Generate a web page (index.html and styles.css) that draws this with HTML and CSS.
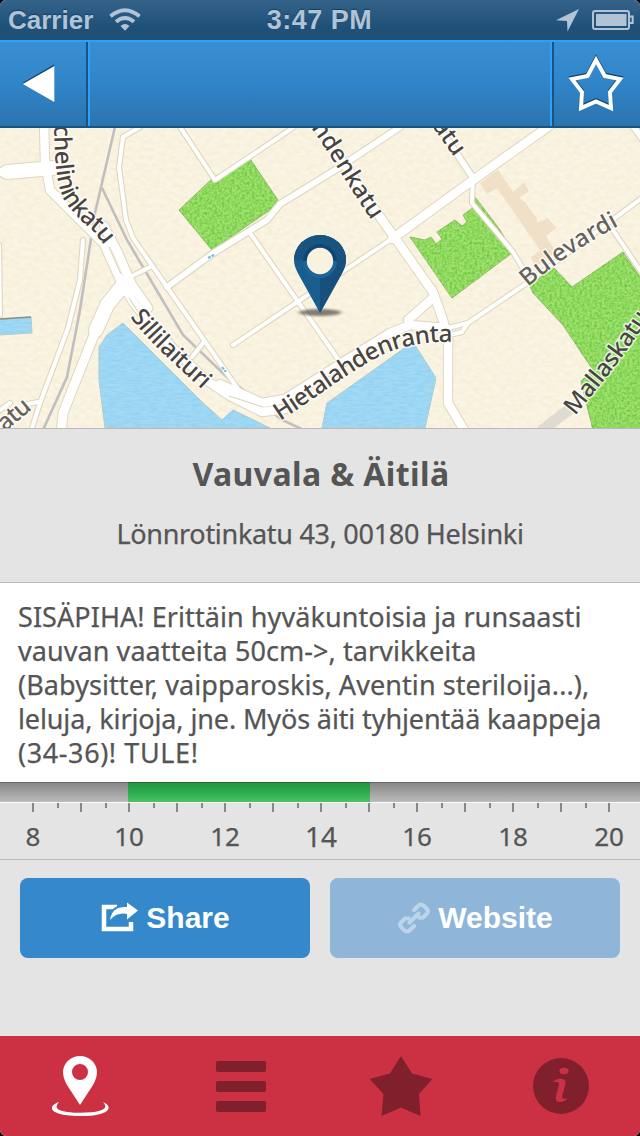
FILE: index.html
```html
<!DOCTYPE html>
<html lang="fi">
<head>
<meta charset="utf-8">
<title>Vauvala &amp; Äitilä</title>
<link rel="stylesheet" href="styles.css">
</head>
<body>
<div class="screen">
  <header class="status">
    <div class="status-left"><span>Carrier</span>
      <svg class="wifi" width="32" height="24" viewBox="0 0 32 24" fill="none" stroke="#b0c4d5" stroke-width="4"><path d="M1.5 8.3Q16 -3.8 30.5 8.3M7 13.8Q16 6.2 25 13.8"/><path d="M11.5 18Q16 14 20.5 18L16 22.8Z" fill="#b0c4d5" stroke="none"/></svg>
    </div>
    <span class="clock">3:47 PM</span>
    <div class="status-right">
      <svg width="24" height="24" viewBox="0 0 24 24"><path d="M23 1L11.5 23.5L11 13L0 12.3Z" fill="#b0c4d5"/></svg>
      <svg width="42" height="20" viewBox="0 0 42 20"><rect x="1" y="1" width="36" height="18" rx="2" fill="none" stroke="#b0c4d5" stroke-width="2"/><path d="M4 4H34.5V16H4Z" fill="#b0c4d5"/><path d="M38 6.5H40.7V13H38" fill="none" stroke="#b0c4d5" stroke-width="2"/></svg>
    </div>
  </header>
  <nav class="navbar">
    <button class="nav-btn back" aria-label="Back"><svg width="34" height="40" viewBox="0 0 34 40"><path d="M.5 19L32 .5V36Z" fill="#123f66"/><path d="M.8 20L32.3 2V38Z" fill="#fff"/></svg></button>
    <div class="nav-title"></div>
    <button class="nav-btn fav" aria-label="Favourite"><svg width="60" height="60" viewBox="0 0 60 60" fill="none" stroke-width="4"><path d="M30 6L38.8 22L54 25L44 38L45 54L30 47.5L15 54L16 38L6 25L21.5 22Z" stroke="#123f66" transform="translate(0 -1.2)"/><path d="M30 6L38.8 22L54 25L44 38L45 54L30 47.5L15 54L16 38L6 25L21.5 22Z" stroke="#fff"/></svg></button>
  </nav>
  <section class="map">
    <svg width="640" height="300" viewBox="0 128 640 300">
      <defs>
        <filter id="grain" x="0" y="0" width="100%" height="100%" color-interpolation-filters="sRGB">
          <feTurbulence type="fractalNoise" baseFrequency=".4" numOctaves="2" seed="4"/>
          <feColorMatrix values="0 0 0 0 .42  0 0 0 0 .76  0 0 0 0 .24  2 0 0 0 -.7"/>
          <feComposite in2="SourceGraphic" operator="in" result="n"/>
          <feMerge><feMergeNode in="SourceGraphic"/><feMergeNode in="n"/></feMerge>
        </filter>
        <filter id="waves" x="0" y="0" width="100%" height="100%" color-interpolation-filters="sRGB">
          <feTurbulence type="fractalNoise" baseFrequency=".12 .45" numOctaves="2" seed="2"/>
          <feColorMatrix values="0 0 0 0 .53  0 0 0 0 .79  0 0 0 0 .94  1.3 0 0 0 -.45"/>
          <feComposite in2="SourceGraphic" operator="in" result="n"/>
          <feMerge><feMergeNode in="SourceGraphic"/><feMergeNode in="n"/></feMerge>
        </filter>
        <filter id="paper" x="0" y="0" width="100%" height="100%" color-interpolation-filters="sRGB">
          <feTurbulence type="fractalNoise" baseFrequency=".15 .25" numOctaves="2" seed="7"/>
          <feColorMatrix values="0 0 0 0 .93  0 0 0 0 .89  0 0 0 0 .78  .8 0 0 0 -.25"/>
          <feComposite in2="SourceGraphic" operator="in" result="n"/>
          <feMerge><feMergeNode in="SourceGraphic"/><feMergeNode in="n"/></feMerge>
        </filter>
        <filter id="soft" x="-30%" y="-100%" width="160%" height="300%"><feGaussianBlur stdDeviation="2.2 1.3"/></filter>
        <g id="thin" class="road">
          <path d="M83 240L80 280L68 328L40 403L32 428M10 403L-4 413M38 402L28 404"/>
          <path d="M140 127L123 137L119 167L126 220L133 238L167 287L220 363L240 392"/>
          <path d="M130 277L150 267M192 357L203 343M250 233L340 362M233 345L390 240"/>
          <path d="M180 127L215 180L294 127M-1 245L0 315M473 177L472 203L513 252L525 272"/>
          <path d="M448 328L468 323L527 283L642 198M450 335L462 332L468 323M613 230L642 273"/>
        </g>
        <g id="medium" class="road"><path d="M167 287L212 254L267 220L280 204L340 167L400 127M437 124L473 178M630 122L645 142"/></g>
        <g id="main" class="road">
          <path d="M44 120L45 162L50 190L104 244L122 284L135 305L172 347L206 380L230 396L262 412L285 409"/>
          <path d="M104 226L118 253L132 285L148 308M220 384L262 403L285 399L340 364L390 333L410 325L446 328"/>
          <path d="M315 124L350 172L380 217L400 245L433 292L443 320L448 340V403L464 430"/>
          <path d="M392 239L473 180L552 124M434 297L408 320M-6 172L10 172"/>
        </g>
        <g id="wide" class="road"><path d="M7 172L53 168M124 284L107 305L96 330"/></g>
      </defs>
      <rect y="128" width="640" height="300" fill="#fbf5e4" filter="url(#paper)"/>
      <g fill="#a2daf5" stroke="#b8ccc4" filter="url(#waves)">
        <path d="M123 323L200 400L222 420L233 410L270 428H105L99 380V347L107 335Z"/><path d="M322 428L327 403L413 342L436 378L425 428Z"/><path d="M-2 320L31 317L32 333L-2 335Z"/>
      </g>
      <path d="M0 319L31 317" stroke="#858b88" stroke-width="1.5"/>
      <g fill="#9fe36e" stroke="#a9b882" filter="url(#grain)">
        <path d="M179 210L213 178L250 159L280 203L212 250Z"/>
        <path d="M410 237L425 240L431 237L436 244L442 239L437 232L455 220L462 226L467 222L463 215L474 207L512 253L452 298Z"/>
        <path d="M475 197L472 203L513 252L500 230Z"/>
        <path d="M553 267L572 287L623 252L642 280V430H593L581 381L593 370L563 325L533 293L527 280Z"/>
      </g>
      <path fill="#f0e0c8" d="M480 183L498 170L513 192L524 182L529 191L519 198L525 202L537 219V223L548 218L556 228L546 236L556 252L535 267L531 257L540 250L497 188L487 194Z"/>
      <path d="M541 431L570 409" stroke="#dedbd0" stroke-width="11"/>
      <path d="M115 127L95 213L80 310L67 377L43 430M102 188L127 240L183 335L228 378L282 420L304 430" fill="none" stroke="#c1bfbd" stroke-width="2.6"/>
      <g stroke="#ddd7be"><use href="#thin" stroke-width="6.2"/><use href="#medium" stroke-width="8"/><use href="#main" stroke-width="10.5"/><use href="#wide" stroke-width="16"/><path class="road" d="M96 330L63 413L61 434" stroke-width="11"/></g>
      <g stroke="#fff"><use href="#thin" stroke-width="4"/><use href="#medium" stroke-width="5.8"/><use href="#main" stroke-width="8.5"/><use href="#wide" stroke-width="14"/><path class="road" d="M96 330L63 413L61 434" stroke-width="9"/></g>
      <path d="M109 247L121 274M129 298L143 319M229 396L263 407" stroke="#ddd7be" stroke-width="1.2"/>
      <path d="M208 258L214 255M222 367L226 372" stroke="#65bdeb" stroke-width="2" stroke-dasharray="3 1"/>
      <g class="streets">
        <path id="p1" d="M54 125C55 168 57 190 67 204Q77 218 93 231L118 262"/><path id="p2" d="M130 317C150 343 168 358 209 396"/>
        <path id="p3" d="M280 421C317 397 347 373 382 355Q415 340 460 342"/><path id="p4" d="M311 128C331 155 350 190 377 228"/>
        <path id="p5" d="M424 115L460 165"/><path id="p6" d="M528 287Q572 249 634 218"/><path id="p7" d="M575 416C602 382 623 360 657 305"/><path id="p8" d="M5 432L49 395"/>
        <text><textPath href="#p1" textLength="137">chelininkatu</textPath></text>
        <text><textPath href="#p2" textLength="103">Sillilaituri</textPath></text>
        <text><textPath href="#p3" textLength="194">Hietalahdenranta</textPath></text>
        <text><textPath href="#p4" textLength="111">ndenkatu</textPath></text>
        <text><textPath href="#p5" textLength="52">katu</textPath></text>
        <text class="minor"><textPath href="#p6" textLength="110">Bulevardi</textPath></text>
        <text><textPath href="#p7" textLength="124">Mallaskatu</textPath></text>
        <text class="minor"><textPath href="#p8" textLength="36">atu</textPath></text>
      </g>
      <ellipse cx="320" cy="312.5" rx="21" ry="3.5" fill="#514c43" opacity=".7" filter="url(#soft)"/>
      <path d="M320 313L300 277Q294 267 294 260A26 25 0 0 1 346 260Q346 267 340 277Z" fill="#195d8f"/>
      <path d="M320 313V235A26 25 0 0 1 346 260Q346 267 340 277Z" fill="#17507c"/>
      <path d="M294 260A26 25 0 0 1 346 260Z" fill="#17547f"/>
      <circle cx="320" cy="261" r="17" fill="#1c659a"/><path d="M303 261A17 17 0 0 1 337 261Z" fill="#10466f"/><circle cx="320" cy="261" r="13.2" fill="#f9f2df"/>
    </svg>
  </section>
  <section class="place"><h1>Vauvala &amp; Äitilä</h1><p>Lönnrotinkatu 43, 00180 Helsinki</p></section>
  <section class="about"><p><span>SISÄPIHA! Erittäin hyväkuntoisia ja runsaasti</span><br><span>vauvan vaatteita 50cm-&gt;, tarvikkeita</span><br><span>(Babysitter, vaipparoskis, Aventin steriloija...),</span><br><span class="tight">leluja, kirjoja, jne. Myös äiti tyhjentää kaappeja</span><br><span class="loose">(34-36)! TULE!</span></p></section>
  <section class="hours">
    <div class="bar"><div class="open"></div></div>
    <div class="ticks"></div>
    <div class="scale"><span>8</span><span>10</span><span>12</span><span class="current">14</span><span>16</span><span>18</span><span>20</span></div>
  </section>
  <section class="actions">
    <button class="btn"><svg width="40" height="32" viewBox="0 0 40 32"><path d="M17 5H4V27H31V20" fill="none" stroke="#fff" stroke-width="4.5"/><path d="M10 18Q12 4 27 5V.5L38 8.5L27 17.5V12Q17 10 10 18Z" fill="#fff" stroke="#3588ca" stroke-width="4" paint-order="stroke"/></svg><span>Share</span></button>
    <button class="btn off"><svg width="34" height="34" viewBox="0 0 34 34" fill="none" stroke="#bcd5ea" stroke-width="4" stroke-linecap="round" stroke-linejoin="round"><path d="M17 9L21.5 4.5Q24 2.5 27 5L29.5 7.5Q32 10 30 12.5L26 16.5L22.5 16.8M17 25L12.5 29.5Q10 31.5 7 29L4.5 26.5Q2 24 4 21.5L8 17.5L11.5 17.2M12.5 21.5L21.5 12.5"/></svg><span>Website</span></button>
  </section>
  <nav class="tabs">
    <div class="tab"><svg width="60" height="64" viewBox="0 -2 60 64"><path d="M30 49L17 29Q13 22 13 16A17 16 0 0 1 47 16Q47 22 43 29ZM30 8A8 8 0 1 0 30 24A8 8 0 1 0 30 8Z" fill="#fff" fill-rule="evenodd"/><path d="M9 46C-3 50 -2 60 30 60S63 50 53 46Q63 56.5 30 56.8Q-1 56.5 9 46Z" fill="#fff"/></svg></div>
    <div class="tab list"><i></i><i></i><i></i></div>
    <div class="tab shift"><svg width="64" height="64" viewBox="0 0 64 64"><path d="M32 2L43 19.5L63.3 25L50 40L51.5 62L32 53.5L12.5 62L14.5 40L.5 25L21 19.5Z" fill="#80202c"/></svg></div>
    <div class="tab shift"><svg width="58" height="58" viewBox="0 0 58 58"><circle cx="29" cy="29" r="28" fill="#80202c"/><ellipse cx="32" cy="14" rx="4.5" ry="3.2" fill="#cb3043"/><path d="M21 25Q24 21.7 29.5 21.8Q34.5 22 33.3 27L30.2 39Q29.8 43 35.5 41Q33 45 27.5 45Q22.5 44.5 24 39L27 28Q27.8 23.8 21 25Z" fill="#cb3043"/></svg></div>
  </nav>
</div>
</body>
</html>
```
FILE: styles.css
```css
* { box-sizing: border-box; }
body { margin: 0; background: #000; }
p, h1 { margin: 0; }
button { border: 0; padding: 0; margin: 0; background: none; }
svg { display: block; }
.screen { width: 640px; height: 1136px; display: flex; flex-direction: column; overflow: hidden; border-radius: 6px; background: #e4e4e4; color: #555; font-family: "Noto Sans", "Open Sans", sans-serif; }
.status { height: 40px; flex: none; display: grid; grid-template-columns: 1fr auto 1fr; align-items: center; padding: 0 6px 1px 8px; background: linear-gradient(#35638a, #1e5078 70%); color: #b0c4d5; font: bold 26px/38px "Liberation Sans", Arial, sans-serif; text-shadow: 0 -1px 1px #173e60; }
.status-left, .status-right { display: flex; align-items: center; gap: 16px; }
.status-right { justify-content: flex-end; gap: 12px; }
.clock { font-size: 27px; letter-spacing: .5px; padding-right: 3px; }
.navbar { height: 88px; flex: none; display: flex; border-top: 2px solid #2fa0fa; border-bottom: 2px solid #175482; background: linear-gradient(#3a8fd3, #3084c8 50%, #2c74ad); }
.nav-btn { width: 88px; display: flex; align-items: center; justify-content: center; }
.back { border-right: 2px solid #175482; padding: 0 8px 0 0; }
.fav { border-left: 2px solid #175482; padding-right: 2px; }
.nav-title { flex: 1; border: solid #2fa0fa; border-width: 0 2px; }
.map { height: 300px; flex: none; overflow: hidden; }
.road { fill: none; stroke-linecap: round; stroke-linejoin: round; }
.streets path { fill: none; }
.streets text { font: 500 24px "Noto Sans", sans-serif; fill: #48443f; stroke: rgba(255,255,255,.75); stroke-width: 3px; paint-order: stroke; }
.streets .minor { fill: #66615a; }
.place { height: 154px; flex: none; border-top: 1px solid #b9b9b9; text-align: center; padding-top: 22px; }
.place h1 { font-size: 32px; line-height: 46px; letter-spacing: .4px; padding-left: 2px; }
.place p { font-size: 27px; line-height: 36px; margin-top: 19px; letter-spacing: -.3px; -webkit-text-stroke: .25px; }
.about { height: 200px; flex: none; padding: 17px 18px 0; background: #fff; border-top: 1px solid #b9b9b9; font-size: 27px; line-height: 34px; letter-spacing: .07px; white-space: nowrap; -webkit-text-stroke: .25px; }
.tight { letter-spacing: -.12px; }
.loose { letter-spacing: .6px; }
.hours { height: 78px; flex: none; border-bottom: 1px solid #b9b9b9; }
.bar { height: 20px; background: linear-gradient(#858585, #bbb); padding-left: 128px; box-shadow: inset 0 1px #666; }
.open { width: 242px; height: 20px; background: linear-gradient(#278f40, #2ba84b 45%, #48c467); box-shadow: inset 0 1px #246934; }
.ticks { height: 10px; border-top: 1px solid #fff; background: repeating-linear-gradient(90deg, #888 0 2px, transparent 2px 48px) 32px 0 / 578px 10px no-repeat, repeating-linear-gradient(90deg, #888 0 2px, transparent 2px 48px) 57px 0 / 530px 5px no-repeat; }
.scale { display: flex; margin: 5px 0 0 -15px; font-size: 26px; line-height: 38px; -webkit-text-stroke: .25px; }
.scale span { width: 96px; flex: none; text-align: center; }
.scale .current { font-size: 28px; }
.actions { display: flex; gap: 20px; padding: 18px 20px; }
.btn { width: 290px; height: 80px; border-radius: 8px; background: #3588ca; color: #fff; display: flex; align-items: center; justify-content: center; gap: 6px; font: bold 30px "Liberation Sans", Arial, sans-serif; }
.off { background: #8fb6d8; gap: 7px; }
.tabs { height: 100px; margin-top: auto; display: flex; background: #cb3043; }
.tab { width: 160px; display: flex; align-items: center; justify-content: center; }
.shift { padding-left: 2px; }
.list { flex-direction: column; gap: 9px; padding-left: 2px; }
.list i { width: 50px; height: 11px; border-radius: 2px; background: #80202c; }
```
